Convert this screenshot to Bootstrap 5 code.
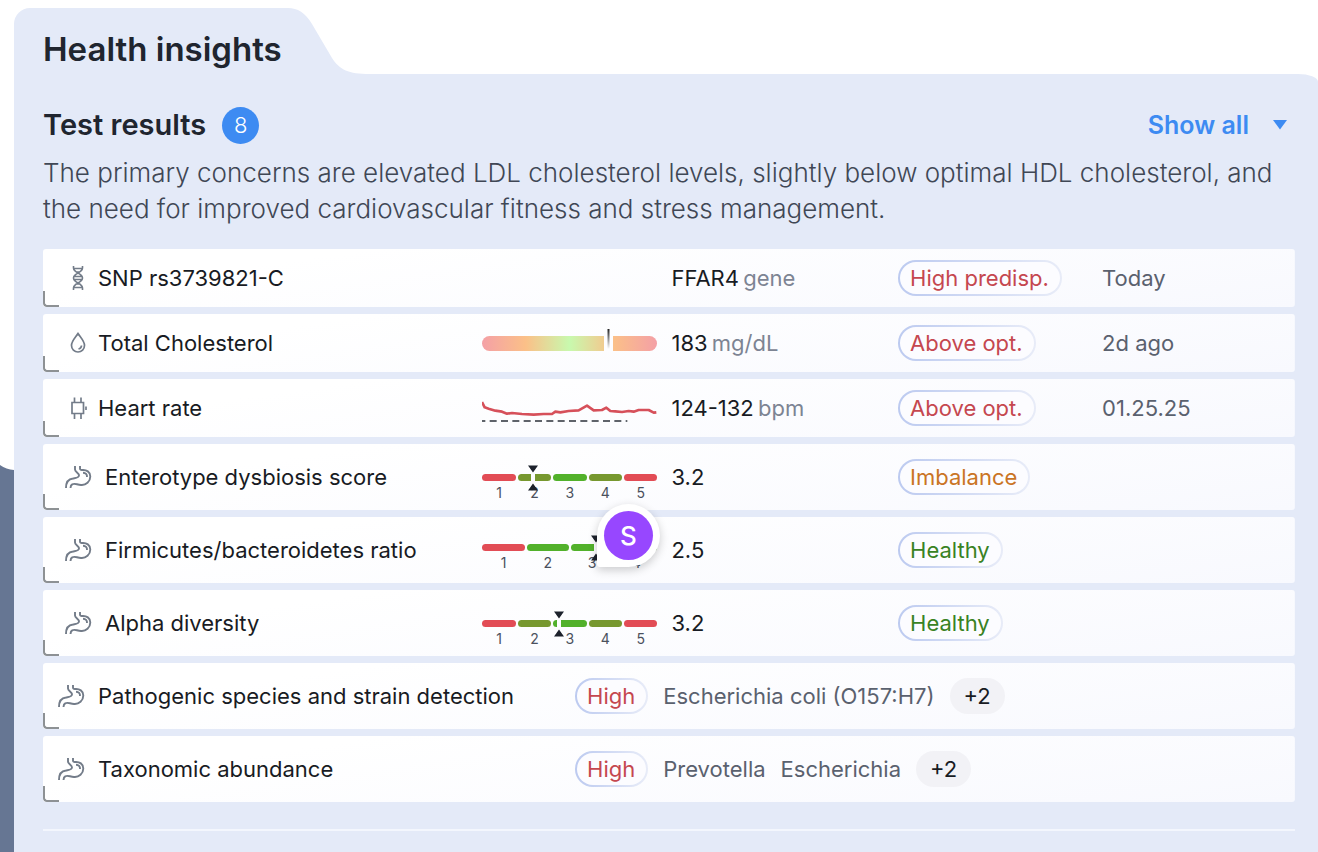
<!DOCTYPE html>
<html lang="en">
<head>
<meta charset="utf-8">
<meta name="viewport" content="width=device-width, initial-scale=1">
<title>Health insights</title>
<link href="https://cdn.jsdelivr.net/npm/bootstrap@5.3.0/dist/css/bootstrap.min.css" rel="stylesheet">
<style>
  :root { --panel: #e4eaf8; --ink: #20252f; --soft: #5a616e; --slate: #667693; --blue: #3d8bf2; }
  body { font-family: Inter, "Liberation Sans", sans-serif; color: #181b23; background: #fff; overflow-x: hidden; }
  .rail { width: 14px; background: var(--slate); }
  .rail-top { height: 465px; background: #fff; }
  .tab-label { background: var(--panel); border-top-left-radius: 16px; height: 66px; width: 274px; padding-left: 29px; white-space: nowrap; }
  .tab-label h1 { font-size: 33px; line-height: 40px; font-weight: 600; color: var(--ink); }
  .panel { background: var(--panel); border-top-right-radius: 20px 8px; padding: 32px 23px 20px 29px; }
  .panel h2 { font-size: 29px; line-height: 38px; font-weight: 600; color: var(--ink); }
  .count { width: 37px; height: 37px; background: var(--blue); color: #fff; font-size: 22px; font-weight: 300; }
  .toggle-all { color: var(--blue); font-size: 25px; line-height: 38px; font-weight: 600; }
  .summary { font-size: 26px; line-height: 36px; font-weight: 300; color: #404755; margin: 11px 0 22px; }
  .results { table-layout: fixed; border-collapse: separate; border-spacing: 0 7px; font-size: 22px; line-height: 32px; font-weight: 400; margin: -7px 0; }
  .results tr { height: 66px; background: linear-gradient(172deg, #fff 20%, #f8f9fe); clip-path: inset(0 round 3px); }
  .results tr.compact { height: 58px; }
  .results th, .results td { padding: 0; vertical-align: middle; white-space: nowrap; }
  .results th { position: relative; padding-left: 21px; font-weight: inherit; }
  .results th.flush { padding-left: 14px; }
  .results th::after { content: ""; position: absolute; left: 0; bottom: 0; width: 16px; height: 16px; border: solid #8d9194; border-width: 0 0 2px 2px; border-bottom-left-radius: 4px; }
  .named { gap: 13px; }
  .compact .named { gap: 6px; }
  .glyph { width: 28px; height: 28px; fill: none; stroke: #737c89; stroke-width: 2; flex: none; }
  .unit { color: #7d8493; margin-left: -2px; }
  .soft { color: var(--soft); }
  .tag { display: inline-block; height: 36px; line-height: 32px; padding: 0 11px 0 10px; border: 2px solid transparent; border-radius: 18px;
         background: linear-gradient(#fcfcff, #fcfcff) padding-box, linear-gradient(90deg, #bccaf0, #e8ecf8) border-box; }
  .bad { color: #c5474f; } .warn { color: #ca7424; } .good { color: #398223; }
  .findings { gap: 15px; }
  .more { height: 36px; line-height: 36px; border: 0; border-radius: 18px; background: #f2f2f6; color: #181b23; padding: 0 14px; }
  .chart { width: 175px; display: block; position: relative; }
  .scale { padding-top: 21px; gap: 2px; font-size: 14px; line-height: 16px; color: #4b515d; }
  .scale.short { padding-top: 14px; }
  .scale > span { flex: 1; text-align: center; position: relative; }
  .scale > span::before { content: ""; display: block; height: 7px; margin-bottom: 4px; border-radius: 4px; background: var(--c); }
  .needle { position: absolute; width: 12px; height: 28px; bottom: 9px; margin-left: -6px; }
  .rule { height: 2px; background: #f3f6fd; margin-top: 27px; }
  .marker { position: absolute; left: 554px; top: 262px; width: 63px; height: 63px; border-radius: 50% 50% 50% 3px; background: #fff; box-shadow: 0 3px 10px #0003; }
  .marker span { width: 49px; height: 49px; background: #9747ff; color: #fff; font-size: 26px; font-weight: 500; }
</style>
</head>
<body>
<svg class="d-none" aria-hidden="true">
  <symbol id="dna" viewBox="0 0 28 28"><path d="M9.500 2v2c0 5 9 5 9 10s-9 5-9 10v2M18.500 2v2c0 5-9 5-9 10s9 5 9 10v2M10 4.500h8M11.500 8h5M10 12.500h8M10 15.500h8M11.500 20h5M10 23.500h8" stroke-width="1.600"/></symbol>
  <symbol id="drop" viewBox="0 0 28 28"><path d="M14 4.500c-2.500 4-6.500 7.500-6.500 12a6.500 6.500 0 0 0 13 0c0-4.500-4-8-6.500-12zM17.500 16.500c0 2-1 3-3 3.500" stroke-width="1.700"/></symbol>
  <symbol id="watch" viewBox="0 0 28 28"><path d="M8 8.500h11.500v11H8zM10.500 8V3.500M17 8V3.500M10.500 20v5M17 20v5M22 12.500v3.500" stroke-width="1.700"/></symbol>
  <symbol id="stomach" viewBox="0 0 28 28"><path d="M11 3v3.500c0 2.500 4.200 3.500 4 6-.2 2.500-3.500 2.500-6 3C4 16 2 19 2 25M16 3v2.500c0 1.200 1 1.700 2 1.500 4.500-.5 8.300 2 8.300 6.500 0 5-4.300 9-9.300 8.500-4-.3-6.500-2-8.500-.8-1.500.8-2 2-2 3.800M19 9.700c2.700 0 4.200 1.800 4 4.300" stroke-width="1.900"/></symbol>
  <symbol id="pins" viewBox="0 0 12 28"><path d="M4 9h4v10H4z" fill="#fdfdff"/><path d="M1 1.500h10L6 8.500zM1 26.500h10L6 19.500z" fill="#1d222c"/></symbol>
</svg>

<div class="d-flex min-vh-100">
  <div class="rail flex-shrink-0">
    <div class="rail-top"></div>
    <svg class="d-block" width="14" height="6" viewBox="0 0 14 6"><path d="M0 0c4 3 9 4.500 14 5V0z" fill="#fff"/></svg>
  </div>
  <main class="d-flex flex-column flex-grow-1 pt-2">
    <header class="d-flex">
      <div class="tab-label d-flex align-items-center"><h1 class="m-0 mt-3">Health insights</h1></div>
      <svg width="84" height="66" viewBox="0 0 84 66"><path d="M-1 0C9 0 17 4 24 16l20 34C52 62 60 66 82 66H-1z" fill="#e4eaf8"/></svg>
    </header>
    <section class="panel flex-grow-1" aria-labelledby="results-title">
      <div class="d-flex align-items-center">
        <h2 class="m-0" id="results-title">Test results</h2>
        <span class="count rounded-circle d-flex align-items-center justify-content-center ms-3">8</span>
        <button type="button" class="toggle-all btn p-0 border-0 ms-auto d-flex align-items-center">Show all
          <svg class="ms-4 me-2" width="14" height="10" viewBox="0 0 14 10"><path d="M0 0h14L7 9.500z" fill="#3d8bf2"/></svg>
        </button>
      </div>
      <p class="summary">The primary concerns are elevated LDL cholesterol levels, slightly below optimal HDL cholesterol, and the need for improved cardiovascular fitness and stress management.</p>

      <div class="position-relative">
        <table class="results w-100" aria-labelledby="results-title">
          <colgroup><col style="width:35.100%"><col style="width:7.400%"><col style="width:7.700%"><col style="width:18.100%"><col style="width:16.300%"><col></colgroup>
          <tbody>
            <tr class="compact">
              <th scope="row"><div class="named d-flex align-items-center"><svg class="glyph"><use href="#dna"/></svg><span>SNP rs3739821-C</span></div></th>
              <td colspan="2"></td>
              <td>FFAR4 <span class="unit">gene</span></td>
              <td><span class="tag bad">High predisp.</span></td>
              <td class="soft">Today</td>
            </tr>
            <tr class="compact">
              <th scope="row"><div class="named d-flex align-items-center"><svg class="glyph"><use href="#drop"/></svg><span>Total Cholesterol</span></div></th>
              <td colspan="2">
                <svg class="chart" height="28" viewBox="0 0 175 28">
                  <defs>
                    <linearGradient id="range"><stop offset="0" stop-color="#f4a0a6"/><stop offset=".25" stop-color="#fbc088"/><stop offset=".5" stop-color="#c8f9ae"/><stop offset=".75" stop-color="#fbc088"/><stop offset="1" stop-color="#f4a0a6"/></linearGradient>
                    <linearGradient id="fade" x2="0" y2="1"><stop offset="0" stop-color="#222"/><stop offset="1" stop-color="#fff"/></linearGradient>
                  </defs>
                  <rect y="7" width="175" height="15" rx="7.500" fill="url(#range)"/>
                  <rect x="122" y="6" width="9" height="17" fill="#fdfdff"/><rect x="125.500" width="2" height="20" fill="url(#fade)"/>
                </svg>
              </td>
              <td>183 <span class="unit">mg/dL</span></td>
              <td><span class="tag bad">Above opt.</span></td>
              <td class="soft">2d ago</td>
            </tr>
            <tr class="compact">
              <th scope="row"><div class="named d-flex align-items-center"><svg class="glyph"><use href="#watch"/></svg><span>Heart rate</span></div></th>
              <td colspan="2">
                <svg class="chart" height="28" viewBox="0 253 525 84" fill="none">
                  <path d="M0 277l8 16 12 4 20 6 20 3 15 6 15-2 30 3 35 2 30-2h25l10-7 15 2 25-4 30-2 25-14 20 14 25-1 13-7 12 10 15 1 20 2 20-3 15 2 15-5h30l15 8 8-1" stroke="#d6505a" stroke-width="8" stroke-linejoin="round"/>
                  <path d="M0 334h436" stroke="#2b303a" stroke-width="5" stroke-dasharray="21 13" stroke-dashoffset="11"/>
                </svg>
              </td>
              <td>124-132 <span class="unit">bpm</span></td>
              <td><span class="tag bad">Above opt.</span></td>
              <td class="soft">01.25.25</td>
            </tr>
            <tr>
              <th scope="row"><div class="named d-flex align-items-center"><svg class="glyph"><use href="#stomach"/></svg><span>Enterotype dysbiosis score</span></div></th>
              <td colspan="2"><div class="chart scale d-flex">
                <span style="--c:#e24c55">1</span><span style="--c:#77982f">2</span><span style="--c:#52b12b">3</span><span style="--c:#77982f">4</span><span style="--c:#e24c55">5</span>
                <svg class="needle" style="left:29%"><use href="#pins"/></svg></div></td>
              <td>3.2</td>
              <td><span class="tag warn">Imbalance</span></td>
              <td></td>
            </tr>
            <tr>
              <th scope="row"><div class="named d-flex align-items-center"><svg class="glyph"><use href="#stomach"/></svg><span>Firmicutes/bacteroidetes ratio</span></div></th>
              <td colspan="2"><div class="chart scale short d-flex">
                <span style="--c:#e24c55">1</span><span style="--c:#52b12b">2</span><span style="--c:#52b12b">3</span><span style="--c:#52b12b">4</span>
                <svg class="needle" style="left:65%"><use href="#pins"/></svg></div></td>
              <td>2.5</td>
              <td><span class="tag good">Healthy</span></td>
              <td></td>
            </tr>
            <tr>
              <th scope="row"><div class="named d-flex align-items-center"><svg class="glyph"><use href="#stomach"/></svg><span>Alpha diversity</span></div></th>
              <td colspan="2"><div class="chart scale d-flex">
                <span style="--c:#e24c55">1</span><span style="--c:#77982f">2</span><span style="--c:#52b12b">3</span><span style="--c:#77982f">4</span><span style="--c:#e24c55">5</span>
                <svg class="needle" style="left:43.500%"><use href="#pins"/></svg></div></td>
              <td>3.2</td>
              <td><span class="tag good">Healthy</span></td>
              <td></td>
            </tr>
            <tr>
              <th scope="row" colspan="2" class="flush"><div class="named d-flex align-items-center"><svg class="glyph"><use href="#stomach"/></svg><span>Pathogenic species and strain detection</span></div></th>
              <td colspan="4"><div class="findings d-flex align-items-center soft"><span class="tag bad">High</span><span>Escherichia coli (O157:H7)</span><button type="button" class="more">+2</button></div></td>
            </tr>
            <tr>
              <th scope="row" colspan="2" class="flush"><div class="named d-flex align-items-center"><svg class="glyph"><use href="#stomach"/></svg><span>Taxonomic abundance</span></div></th>
              <td colspan="4"><div class="findings d-flex align-items-center soft"><span class="tag bad">High</span><span>Prevotella</span><span>Escherichia</span><button type="button" class="more">+2</button></div></td>
            </tr>
          </tbody>
        </table>
        <div class="marker d-flex align-items-center justify-content-center"><span class="rounded-circle d-flex align-items-center justify-content-center">S</span></div>
      </div>
      <div class="rule"></div>
    </section>
  </main>
</div>
<script src="https://cdn.jsdelivr.net/npm/bootstrap@5.3.0/dist/js/bootstrap.bundle.min.js"></script>
</body>
</html>
